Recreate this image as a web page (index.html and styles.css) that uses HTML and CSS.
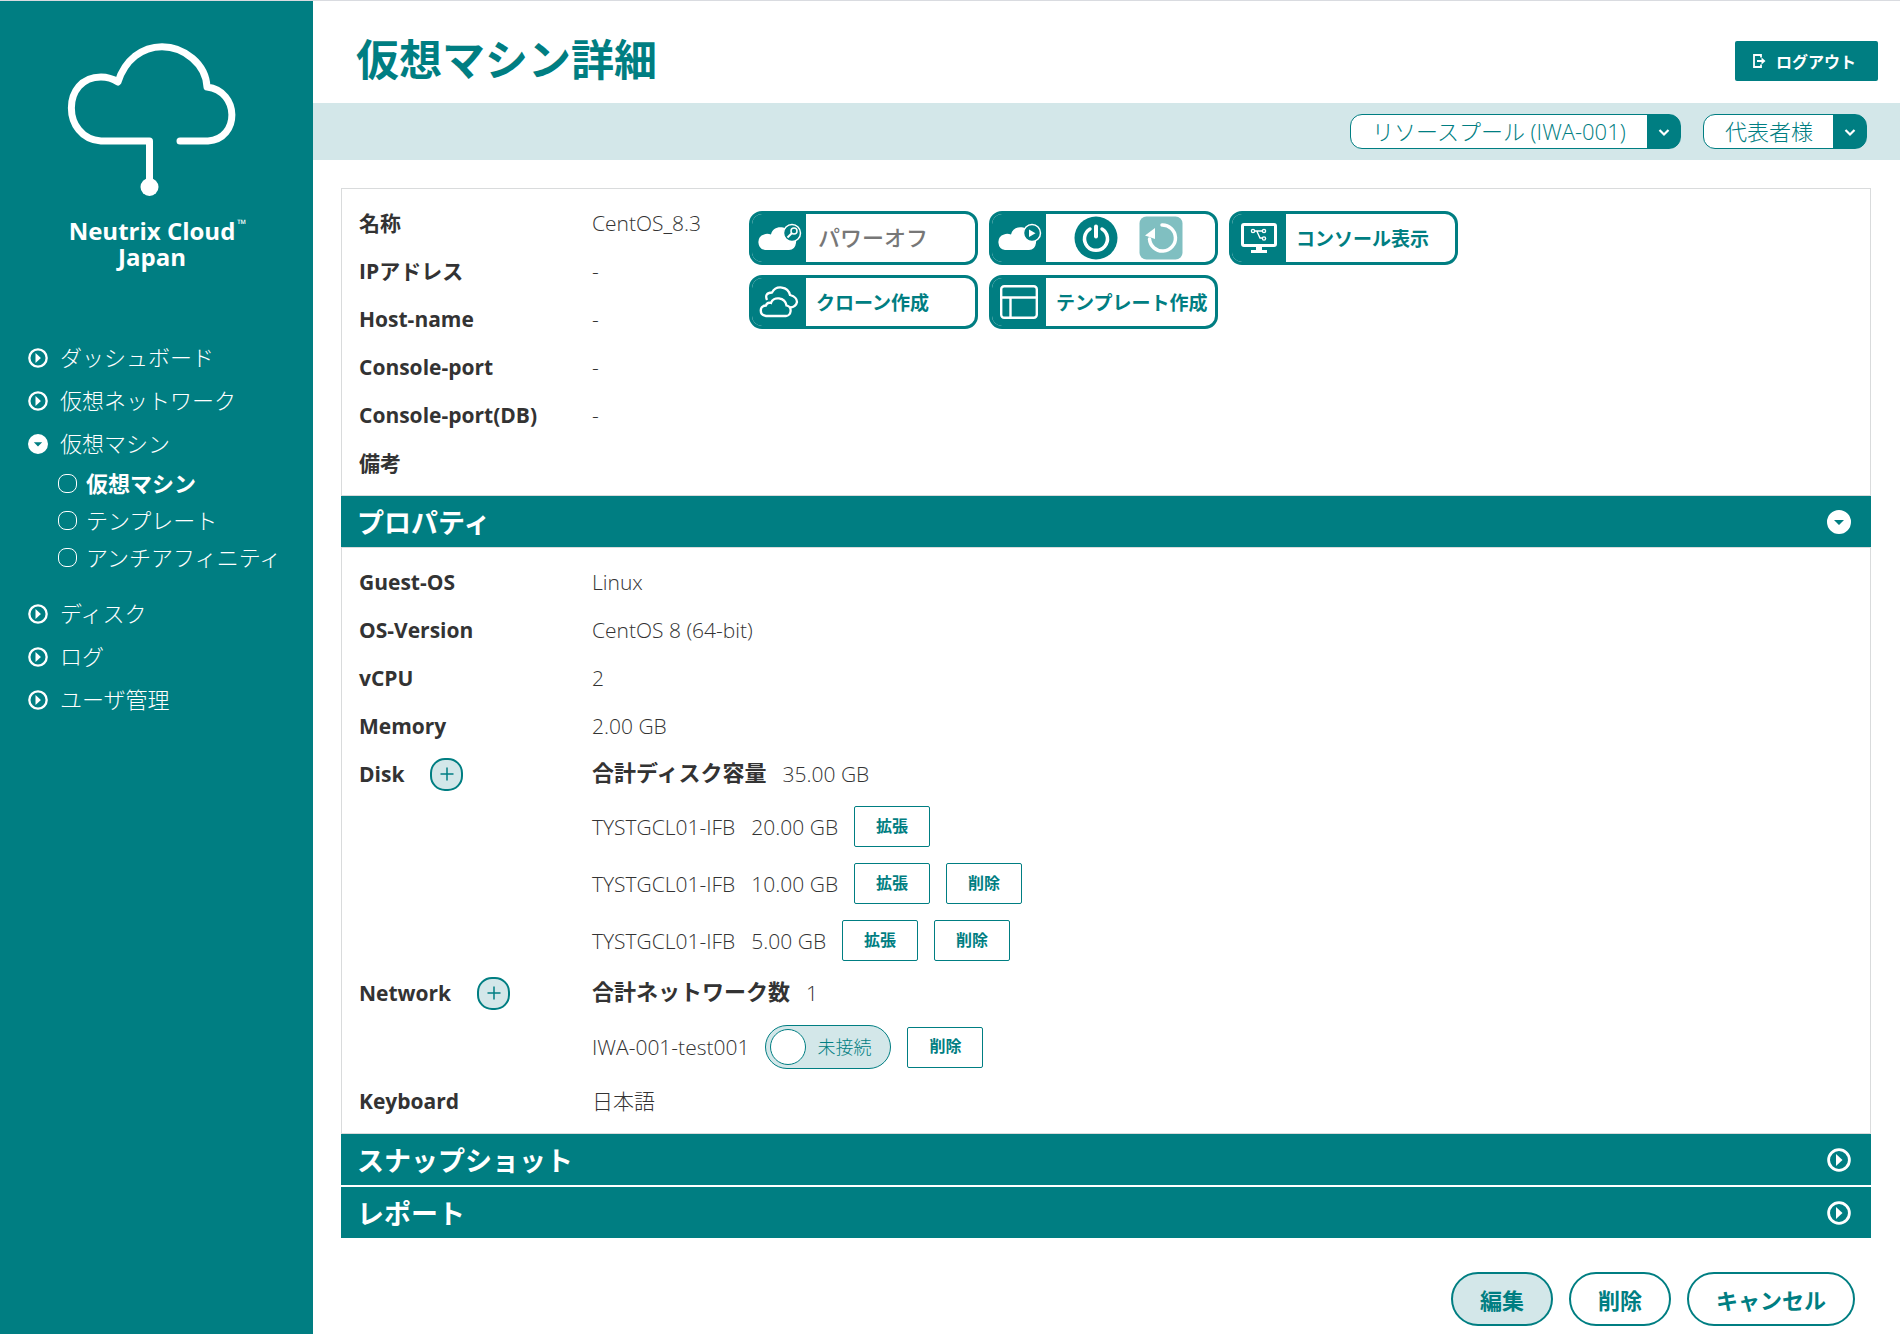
FILE: index.html
```html
<!DOCTYPE html>
<html lang="ja">
<head>
  <meta charset="UTF-8" />
  <meta name="viewport" content="width=device-width, initial-scale=1" />
  <title>仮想マシン詳細</title>
  <link rel="stylesheet" href="styles.css">
</head>
<body>
  <!-- 共通アイコン -->
  <svg class="defs" width="0" height="0" aria-hidden="true">
    <symbol id="ico-right" viewBox="0 0 24 24">
      <circle cx="12" cy="12" r="10.4" fill="none" stroke="currentColor" stroke-width="2.8" />
      <path d="M9 6l6.5 6L9 18z" fill="currentColor" />
    </symbol>
    <symbol id="ico-down" viewBox="0 0 24 24">
      <path fill-rule="evenodd" fill="currentColor" d="M12 0a12 12 0 1 0 0 24a12 12 0 1 0 0-24zM7 10h10l-5 5z" />
    </symbol>
    <symbol id="ico-chevron" viewBox="0 0 12 12">
      <path d="M1.500 4L6 8.500 10.500 4" fill="none" stroke="currentColor" stroke-width="2.200" />
    </symbol>
    <symbol id="ico-plus" viewBox="0 0 14 14">
      <path d="M7 0.5v13M0.5 7h13" fill="none" stroke="currentColor" stroke-width="1.5" />
    </symbol>
  </svg>

  <div class="layout">
    <aside class="sidebar">
      <div class="logo">
        <svg width="172" height="154" viewBox="66 42 172 154" aria-hidden="true">
          <path d="M149.5 187V141H101C61.500 138 61.500 77 101 77Q110 77 118 82C125 60 142 46.7 162 46.7C184 46.7 206 64 207 87C240 91 240 139 208 141H180" fill="none" stroke="#fff" stroke-width="7" stroke-linecap="round" stroke-linejoin="round" />
          <circle cx="149.5" cy="187" r="9" fill="#fff" />
        </svg>
        <p class="logo-name">Neutrix Cloud<span class="tm">™</span></p>
        <p class="logo-name">Japan</p>
      </div>

      <nav>
        <ul class="menu">
          <li><a href="#"><svg class="menu-icon"><use href="#ico-right" /></svg>ダッシュボード</a></li>
          <li><a href="#"><svg class="menu-icon"><use href="#ico-right" /></svg>仮想ネットワーク</a></li>
          <li>
            <a href="#"><svg class="menu-icon"><use href="#ico-down" /></svg>仮想マシン</a>
            <ul class="submenu">
              <li><a href="#" class="active">仮想マシン</a></li>
              <li><a href="#">テンプレート</a></li>
              <li><a href="#">アンチアフィニティ</a></li>
            </ul>
          </li>
          <li><a href="#"><svg class="menu-icon"><use href="#ico-right" /></svg>ディスク</a></li>
          <li><a href="#"><svg class="menu-icon"><use href="#ico-right" /></svg>ログ</a></li>
          <li><a href="#"><svg class="menu-icon"><use href="#ico-right" /></svg>ユーザ管理</a></li>
        </ul>
      </nav>
    </aside>

    <main class="main">
      <header class="header">
        <h1>仮想マシン詳細</h1>
        <button class="logout">
          <svg width="13" height="14" viewBox="0 0 13 14" aria-hidden="true">
            <path d="M8 3.500V1H1v12h7v-2.500" fill="none" stroke="#fff" stroke-width="1.800" />
            <path d="M4 6h4.500V3.500L12.500 7l-4 3.500V8H4z" fill="#fff" />
          </svg>
          ログアウト
        </button>
      </header>

      <div class="toolbar">
        <div class="select">
          <select class="pool-select" aria-label="リソースプール">
            <option>リソースプール (IWA-001)</option>
          </select>
          <svg class="select-arrow"><use href="#ico-chevron" /></svg>
        </div>
        <div class="select">
          <select class="user-select" aria-label="ユーザ">
            <option>代表者様</option>
          </select>
          <svg class="select-arrow"><use href="#ico-chevron" /></svg>
        </div>
      </div>

      <div class="content">
        <!-- 基本情報 -->
        <section class="panel summary">
          <dl class="info">
            <div class="row"><dt>名称</dt><dd>CentOS_8.3</dd></div>
            <div class="row"><dt>IPアドレス</dt><dd>-</dd></div>
            <div class="row"><dt>Host-name</dt><dd>-</dd></div>
            <div class="row"><dt>Console-port</dt><dd>-</dd></div>
            <div class="row"><dt>Console-port(DB)</dt><dd>-</dd></div>
            <div class="row"><dt>備考</dt><dd></dd></div>
          </dl>

          <div class="actions">
            <div class="action status">
              <span class="action-icon">
                <svg width="46" height="32" viewBox="0 0 46 32" aria-hidden="true">
                  <path d="M9 28a8 8 0 0 1-1-15.500Q11 11 15 12.500C17 3 30 3 34 11Q41 14 40 21Q39 28 33 28z" fill="#fff" />
                  <circle cx="36" cy="11" r="8.500" fill="#007e82" stroke="#fff" stroke-width="1.500" />
                  <circle cx="38" cy="9" r="3" fill="none" stroke="#fff" stroke-width="1.500" />
                  <path d="M36 11l-4.500 4.500" stroke="#fff" stroke-width="2" />
                </svg>
              </span>
              <span class="action-text">パワーオフ</span>
            </div>
            <div class="action">
              <span class="action-icon">
                <svg width="46" height="32" viewBox="0 0 46 32" aria-hidden="true">
                  <path d="M9 28a8 8 0 0 1-1-15.500Q11 11 15 12.500C17 3 30 3 34 11Q41 14 40 21Q39 28 33 28z" fill="#fff" />
                  <circle cx="36" cy="11" r="8.500" fill="#007e82" stroke="#fff" stroke-width="1.500" />
                  <path d="M33 7.500v7.500l6.500-3.750z" fill="#fff" />
                </svg>
              </span>
              <span class="power">
                <button aria-label="電源オン">
                  <svg width="44" height="44" viewBox="0 0 44 44" aria-hidden="true">
                    <circle cx="22" cy="22" r="21.500" fill="#007e82" />
                    <path d="M16 13a11.500 11.500 0 1 0 12 0" fill="none" stroke="#fff" stroke-width="3.500" stroke-linecap="round" />
                    <path d="M22 10.500v10" stroke="#fff" stroke-width="4" stroke-linecap="round" />
                  </svg>
                </button>
                <button aria-label="再起動" disabled>
                  <svg width="44" height="44" viewBox="0 0 44 44" aria-hidden="true">
                    <rect x="0.500" y="0.500" width="43" height="43" rx="7" fill="#80bfc1" />
                    <path d="M23 9a13 13 0 1 1-12.500 14" fill="none" stroke="#fff" stroke-width="3.500" stroke-linecap="round" />
                    <path d="M6 19.500l10-7.500v11z" fill="#fff" />
                  </svg>
                </button>
              </span>
            </div>
            <button class="action">
              <span class="action-icon">
                <svg width="36" height="32" viewBox="0 0 36 32" aria-hidden="true">
                  <rect x="1.500" y="2.500" width="33" height="21" rx="1.500" fill="none" stroke="#fff" stroke-width="3" />
                  <path d="M15 24h6v4h5v3H10v-3h5z" fill="#fff" />
                  <g fill="none" stroke="#fff" stroke-width="1.400">
                    <circle cx="12" cy="9" r="1.600" />
                    <circle cx="23" cy="9" r="1.600" />
                    <circle cx="23" cy="16.500" r="1.600" />
                    <path d="M13.600 9h7.800M16 9.500l3 6.500h2.500" />
                  </g>
                </svg>
              </span>
              <span class="action-text">コンソール表示</span>
            </button>
            <button class="action">
              <span class="action-icon">
                <svg width="40" height="32" viewBox="0 0 40 32" fill="none" stroke="#fff" stroke-width="2.300" aria-hidden="true">
                  <path d="M8 14Q5 7 13 6.500C17-1 29 0 31 9Q38 11 38 16Q37 21 31 21.500" />
                  <path d="M7 30C0 29 0 20 7 19.500Q8 16 12 17C14 10 26 11 27.500 19.500C34 21 32 30 27 30z" />
                </svg>
              </span>
              <span class="action-text">クローン作成</span>
            </button>
            <button class="action">
              <span class="action-icon">
                <svg width="38" height="34" viewBox="0 0 38 34" fill="none" stroke="#fff" stroke-width="2.400" aria-hidden="true">
                  <rect x="1.200" y="1.200" width="35.600" height="31.600" rx="3" />
                  <path d="M2 12.500h34M10.500 13v19" />
                </svg>
              </span>
              <span class="action-text">テンプレート作成</span>
            </button>
          </div>
        </section>

        <!-- プロパティ -->
        <button class="section-bar" aria-expanded="true">プロパティ<svg class="bar-icon"><use href="#ico-down" /></svg></button>
        <section class="panel">
          <dl class="info">
            <div class="row"><dt>Guest-OS</dt><dd>Linux</dd></div>
            <div class="row"><dt>OS-Version</dt><dd>CentOS 8 (64-bit)</dd></div>
            <div class="row"><dt>vCPU</dt><dd>2</dd></div>
            <div class="row"><dt>Memory</dt><dd>2.00 GB</dd></div>
            <div class="row">
              <dt>Disk<button class="add-btn" aria-label="ディスク追加"><svg><use href="#ico-plus" /></svg></button></dt>
              <dd>
                <div class="line"><strong>合計ディスク容量</strong><span>35.00 GB</span></div>
                <div class="line item"><span>TYSTGCL01-IFB</span><span>20.00 GB</span><button class="small-btn">拡張</button></div>
                <div class="line item"><span>TYSTGCL01-IFB</span><span>10.00 GB</span><button class="small-btn">拡張</button><button class="small-btn">削除</button></div>
                <div class="line item"><span>TYSTGCL01-IFB</span><span>5.00 GB</span><button class="small-btn">拡張</button><button class="small-btn">削除</button></div>
              </dd>
            </div>
            <div class="row">
              <dt>Network<button class="add-btn" aria-label="ネットワーク追加"><svg><use href="#ico-plus" /></svg></button></dt>
              <dd>
                <div class="line"><strong>合計ネットワーク数</strong><span>1</span></div>
                <div class="line item">
                  <span>IWA-001-test001</span>
                  <label class="toggle"><input type="checkbox">未接続</label>
                  <button class="small-btn">削除</button>
                </div>
              </dd>
            </div>
            <div class="row"><dt>Keyboard</dt><dd>日本語</dd></div>
          </dl>
        </section>

        <button class="section-bar" aria-expanded="false">スナップショット<svg class="bar-icon"><use href="#ico-right" /></svg></button>
        <button class="section-bar" aria-expanded="false">レポート<svg class="bar-icon"><use href="#ico-right" /></svg></button>

        <div class="footer">
          <button class="pill primary">編集</button>
          <button class="pill">削除</button>
          <button class="pill">キャンセル</button>
        </div>
      </div>
    </main>
  </div>
</body>
</html>
```

FILE: styles.css
```css
* {
  box-sizing: border-box;
}
body {
  margin: 0;
  font-family: "Open Sans", "Noto Sans CJK JP", sans-serif;
  font-size: 21px;
  font-weight: 300;
  color: #333;
  background: #fff;
  border-top: 1px solid #d9dbe0;
}
button,
select {
  font-family: inherit;
  margin: 0;
  cursor: pointer;
}
a {
  color: inherit;
  text-decoration: none;
}
ul, dl, dd, h1, p {
  margin: 0;
  padding: 0;
}
ul {
  list-style: none;
}
.defs {
  position: absolute;
}
.layout {
  display: flex;
  min-height: calc(100vh - 1px);
}

/* サイドバー */
.sidebar {
  flex: 0 0 313px;
  background: #007e82;
  color: #fff;
}
.logo {
  display: flex;
  flex-direction: column;
  align-items: center;
  padding: 41px 9px 0 0;
}
.logo svg {
  margin-bottom: 22px;
}
.logo-name {
  position: relative;
  font-size: 24px;
  font-weight: 700;
  line-height: 26px;
}
.tm {
  position: absolute;
  top: 0;
  left: 100%;
  margin-left: 2px;
  font-size: 12px;
  line-height: 12px;
  font-weight: 400;
}
.menu {
  padding: 66px 0 0 28px;
  font-family: "Noto Sans CJK JP", sans-serif;
  font-size: 22px;
}
.menu a {
  display: flex;
  align-items: center;
  height: 43px;
  padding-bottom: 4px;
}
.menu-icon {
  width: 20px;
  height: 20px;
  margin: 4px 12px 0 0;
}
.submenu {
  padding: 0 0 16px 30px;
}
.submenu a {
  height: 37px;
}
.submenu a::before {
  content: "";
  width: 17px;
  height: 17px;
  margin: 4px 9px 0 0;
  border: 1px solid #fff;
  border-radius: 8px;
}
.submenu .active {
  font-weight: 700;
}

/* ヘッダー */
.main {
  flex: 1;
  min-width: 0;
}
.header {
  display: flex;
  align-items: center;
  justify-content: space-between;
  height: 102px;
  padding: 17px 22px 0 43px;
}
.header h1 {
  padding-bottom: 8px;
  font-family: "Noto Sans CJK JP", sans-serif;
  font-size: 43px;
  line-height: 60px;
  color: #007e82;
}
.logout {
  display: flex;
  align-items: center;
  gap: 10px;
  height: 40px;
  padding: 0 22px 0 18px;
  border: none;
  border-radius: 2px;
  background: #007e82;
  color: #fff;
  font-size: 16px;
  font-weight: 700;
}
.toolbar {
  display: flex;
  align-items: center;
  justify-content: flex-end;
  gap: 22px;
  height: 57px;
  padding: 0 33px 0 0;
  background: #d3e7e9;
}
.select {
  position: relative;
  display: flex;
  height: 35px;
  border: 1px solid #007e82;
  border-radius: 12px;
  background: linear-gradient(to left, #007e82 33px, #fff 33px);
  overflow: hidden;
}
.select select {
  appearance: none;
  padding: 0 0 2px 21px;
  border: none;
  background: none;
  color: #007e82;
  font-size: 22px;
  font-weight: 300;
}
.pool-select {
  width: 329px;
}
.user-select {
  width: 162px;
}
.select-arrow {
  position: absolute;
  top: 11px;
  right: 10px;
  width: 12px;
  height: 12px;
  color: #fff;
  pointer-events: none;
}

/* 詳細パネル */
.content {
  padding: 28px 29px 8px 28px;
}
.panel {
  padding: 10px 17px 8px;
  border: 1px solid #d9dbdc;
}
.summary {
  display: flex;
}
.summary .info {
  flex: 0 0 390px;
}
.row {
  display: flex;
  line-height: 48px;
}
dt {
  flex: 0 0 233px;
  display: flex;
  align-items: center;
  height: 48px;
  font-weight: 700;
}
.line {
  display: flex;
  align-items: center;
  gap: 16px;
}
.line strong {
  height: 48px;
  font-size: 22px;
  font-weight: 700;
  line-height: 44px;
}
.item {
  min-height: 57px;
}
.add-btn {
  display: flex;
  align-items: center;
  justify-content: center;
  width: 33px;
  height: 33px;
  margin-left: 26px;
  padding: 0;
  border: 2px solid #007e82;
  border-radius: 15px;
  background: #d3e7e9;
  color: #007e82;
}
.add-btn svg {
  width: 14px;
  height: 14px;
}
.small-btn {
  width: 76px;
  height: 41px;
  padding: 0 0 4px;
  border: 1px solid #007e82;
  border-radius: 2px;
  background: #fff;
  color: #007e82;
  font-size: 16px;
  font-weight: 700;
}
.toggle {
  display: flex;
  align-items: center;
  gap: 11px;
  width: 126px;
  height: 44px;
  margin: 8px 0;
  padding-left: 4px;
  border: 1px solid #007e82;
  border-radius: 22px;
  background: #d3e7e9;
  color: #007e82;
  font-size: 18px;
}
.toggle input {
  appearance: none;
  width: 36px;
  height: 36px;
  margin: 0;
  border: 1px solid #007e82;
  border-radius: 50%;
  background: #fff;
}

/* 操作ボタン */
.actions {
  display: flex;
  flex-wrap: wrap;
  align-content: flex-start;
  gap: 10px 11px;
  max-width: 720px;
  padding-top: 12px;
}
.action {
  display: flex;
  align-items: stretch;
  width: 229px;
  height: 54px;
  padding: 0;
  border: 3px solid #007e82;
  border-radius: 13px;
  background: #fff;
  color: #007e82;
  font-size: 19px;
  font-weight: 700;
  overflow: hidden;
}
.action-icon {
  flex: 0 0 54px;
  display: flex;
  align-items: center;
  justify-content: center;
  background: #007e82;
}
.action-text {
  align-self: center;
  padding-left: 10px;
}
.status {
  color: #777;
  font-size: 22px;
  font-weight: 500;
}
.status .action-text {
  padding: 0 0 4px 12px;
}
.power {
  display: flex;
  align-items: center;
  gap: 21px;
  padding-left: 28px;
}
.power button {
  height: 44px;
  padding: 0;
  border: none;
  background: none;
}

/* セクション見出し */
.section-bar {
  display: flex;
  align-items: center;
  justify-content: space-between;
  width: 100%;
  height: 51px;
  padding: 0 20px 0 16px;
  border: none;
  background: #007e82;
  color: #fff;
  font-size: 27px;
  font-weight: 700;
}
.section-bar + .section-bar {
  margin-top: 2px;
}
.bar-icon {
  width: 24px;
  height: 24px;
}

.footer {
  display: flex;
  justify-content: flex-end;
  gap: 16px;
  padding: 34px 16px 0 0;
}
.pill {
  height: 54px;
  padding: 0 27px;
  border: 2px solid #007e82;
  border-radius: 27px;
  background: #fff;
  color: #007e82;
  font-size: 22px;
  font-weight: 700;
}
.pill.primary {
  background: #d3e7e9;
}
```
